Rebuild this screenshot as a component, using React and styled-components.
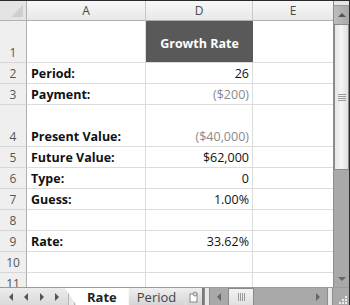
import React from 'react';
import styled, {createGlobalStyle} from 'styled-components';

const GlobalStyle = createGlobalStyle`
  html, body {
    margin: 0;
    padding: 0;
    background: #ffffff;
  }
  body {
    font-family: "Open Sans", "Liberation Sans", sans-serif;
  }
`

const Frame = styled.div`
  width: 350px;
  height: 305px;
  box-sizing: border-box;
  border-top: 1px solid #2a2a2a;
  border-right: 1px solid #2a2a2a;
  display: flex;
  flex-direction: column;
  overflow: hidden;
  background: #fff;
`

const Body = styled.div`
  display: flex;
  height: 286px;
`

const Grid = styled.div`
  display: grid;
  grid-template-columns: 27px 119px 107px 81px;
  grid-template-rows: 20px 42px 21px 21px 42px 21px 21px 21px 21px 21px 21px 21px;
  width: 334px;
  overflow: hidden;
`

const Corner = styled.div`
  background: #e4e4e4;
  border-right: 1px solid #b0b0b0;
  border-bottom: 1px solid #b0b0b0;
  box-sizing: border-box;
  position: relative;
  &::after {
    content: '';
    position: absolute;
    right: 3px;
    bottom: 3px;
    border-left: 12px solid transparent;
    border-bottom: 12px solid #cfcfcf;
  }
`

const ColHeader = styled.div`
  background: linear-gradient(#f7f7f7, #e8e8e8);
  border-right: 1px solid #c8c8c8;
  border-bottom: 1px solid #b0b0b0;
  box-sizing: border-box;
  display: flex;
  align-items: center;
  justify-content: center;
  font-size: 12px;
  color: #4a4a4a;
`

const RowHeader = styled.div`
  background: #efefef;
  border-right: 1px solid #b0b0b0;
  border-bottom: 1px solid #d6d6d6;
  box-sizing: border-box;
  display: flex;
  align-items: flex-end;
  justify-content: center;
  padding-bottom: 1px;
  font-size: 12px;
  color: #555;
`

const Cell = styled.div`
  border-right: 1px solid #dcdcdc;
  border-bottom: 1px solid #dcdcdc;
  box-sizing: border-box;
  display: flex;
  align-items: flex-end;
  justify-content: ${p => (p.$right ? 'flex-end' : 'flex-start')};
  padding: 0 3px 1px 4px;
  font-size: 12.5px;
  font-weight: ${p => (p.$bold ? 700 : 400)};
  color: ${p => (p.$muted ? '#8a8a8a' : '#111')};
  white-space: nowrap;
`

const TitleCell = styled.div`
  background: #595959;
  border-bottom: 1px solid #dcdcdc;
  box-sizing: border-box;
  display: flex;
  align-items: center;
  justify-content: center;
  padding-top: 3px;
  color: #fff;
  font-weight: 700;
  font-size: 12.5px;
`

const VScroll = styled.div`
  width: 15px;
  display: flex;
  flex-direction: column;
  background: #a9a9a9;
  border-left: 1px solid #8c8c8c;
`

const SplitBox = styled.div`
  height: 4px;
  background: #e6e6e6;
  border-bottom: 1px solid #9a9a9a;
`

const ScrollButton = styled.div`
  height: ${p => p.$h || 17}px;
  width: ${p => (p.$w ? `${p.$w}px` : 'auto')};
  background: ${p => p.$bg || 'linear-gradient(90deg, #c4c4c4, #b4b4b4)'};
  display: flex;
  align-items: center;
  justify-content: center;
`

const Thumb = styled.div`
  height: 146px;
  background: linear-gradient(90deg, #e6e6e6, #f4f4f4 50%, #dedede);
  border: 1px solid #8a8a8a;
  box-sizing: border-box;
  display: flex;
  align-items: center;
  justify-content: center;
`

const Track = styled.div`
  flex: 1;
`

const TabBar = styled.div`
  height: 18px;
  display: flex;
  align-items: stretch;
  background: #dcdcdc;
  border-top: 1px solid #9a9a9a;
`

const NavGroup = styled.div`
  width: 68px;
  display: flex;
  align-items: center;
  justify-content: space-around;
  padding: 0 3px;
  box-sizing: border-box;
  background: linear-gradient(#ececec, #d8d8d8);
`

const NavSep = styled.div`
  width: 7px;
  border-left: 1px solid #b4b4b4;
  border-right: 1px solid #b4b4b4;
  box-sizing: border-box;
  background: #e8e8e8;
`

const Tab = styled.div`
  height: 17px;
  padding: 0 ${p => (p.$active ? 12 : 8)}px 0 ${p => (p.$active ? 22 : 18)}px;
  margin-left: -10px;
  display: flex;
  align-items: center;
  font-size: 13px;
  font-weight: ${p => (p.$active ? 700 : 400)};
  color: ${p => (p.$active ? '#222' : '#444')};
  background: ${p => (p.$active ? '#ffffff' : 'linear-gradient(#f0f0f0, #d4d4d4)')};
  clip-path: polygon(0 0, 100% 0, 100% 100%, 12px 100%);
  position: relative;
  z-index: ${p => (p.$active ? 2 : 1)};
  border-bottom: 1px solid #8a8a8a;
  &:first-of-type {
    margin-left: 0;
  }
`

const NewSheet = styled.div`
  width: 24px;
  display: flex;
  align-items: center;
  justify-content: flex-end;
  padding-right: 3px;
  box-sizing: border-box;
  margin-left: -6px;
  background: linear-gradient(#eeeeee, #d2d2d2);
  clip-path: polygon(0 0, 100% 0, 100% 100%, 10px 100%);
`

const HScroll = styled.div`
  flex: 1;
  display: flex;
  align-items: stretch;
  background: #a9a9a9;
  border-left: 2px solid #7a7a7a;
`

const HSplit = styled.div`
  width: 4px;
  background: #e8e8e8;
  border-left: 1px solid #8c8c8c;
  border-right: 1px solid #8c8c8c;
`

const HThumb = styled.div`
  width: 26px;
  background: linear-gradient(#f2f2f2, #e0e0e0);
  border: 1px solid #8a8a8a;
  box-sizing: border-box;
  display: flex;
  align-items: center;
  justify-content: center;
`

const Grip = styled.div`
  width: 16px;
  display: flex;
  align-items: flex-end;
  justify-content: flex-end;
  background: #a9a9a9;
  padding: 2px;
  box-sizing: border-box;
`

const Arrow = ({dir, color = '#555', size = 4}) => {
  const s = size;
  const pts = {
    up: `0,${s} ${s},0 ${2 * s},${s}`,
    down: `0,0 ${2 * s},0 ${s},${s}`,
    left: `${s},0 ${s},${2 * s} 0,${s}`,
    right: `0,0 0,${2 * s} ${s},${s}`,
  }[dir];
  const w = dir === 'up' || dir === 'down' ? 2 * s : s;
  const h = dir === 'up' || dir === 'down' ? s : 2 * s;
  return (
    <svg width={w} height={h} viewBox={`0 0 ${w} ${h}`}>
      <polygon points={pts} fill={color}/>
    </svg>
  );
};

const Lines = ({vertical}) => (
  <svg width={vertical ? 8 : 9} height={vertical ? 9 : 8}>
    {[0, 2, 4, 6].map(i =>
      vertical
        ? <line key={i} x1="0" x2="8" y1={i + 1.5} y2={i + 1.5} stroke="#9a9a9a"/>
        : <line key={i} y1="0" y2="8" x1={i + 1.5} x2={i + 1.5} stroke="#9a9a9a"/>
    )}
  </svg>
);

const rows = [
  {n: 1, title: true},
  {n: 2, label: 'Period:', value: '26'},
  {n: 3, label: 'Payment:', value: '($200)', muted: true},
  {n: 4, label: 'Present Value:', value: '($40,000)', muted: true},
  {n: 5, label: 'Future Value:', value: '$62,000'},
  {n: 6, label: 'Type:', value: '0'},
  {n: 7, label: 'Guess:', value: '1.00%'},
  {n: 8},
  {n: 9, label: 'Rate:', value: '33.62%'},
  {n: 10},
  {n: 11},
];

function App() {
  return (
    <>
      <GlobalStyle/>
      <Frame>
        <Body>
          <Grid>
            <Corner/>
            <ColHeader>A</ColHeader>
            <ColHeader>D</ColHeader>
            <ColHeader>E</ColHeader>
            {rows.map(r => (
              <React.Fragment key={r.n}>
                <RowHeader>{r.n}</RowHeader>
                <Cell $bold>{r.label}</Cell>
                {r.title
                  ? <TitleCell>Growth Rate</TitleCell>
                  : <Cell $right $muted={r.muted}>{r.value}</Cell>}
                <Cell/>
              </React.Fragment>
            ))}
          </Grid>
          <VScroll>
            <SplitBox/>
            <ScrollButton $h={18} $bg="linear-gradient(90deg, #bdbdbd, #a8a8a8)">
              <Arrow dir="up" color="#555"/>
            </ScrollButton>
            <Thumb>
              <Lines vertical/>
            </Thumb>
            <Track/>
            <ScrollButton $h={16} $bg="#a9a9a9">
              <Arrow dir="down" color="#666"/>
            </ScrollButton>
          </VScroll>
        </Body>
        <TabBar>
          <NavGroup>
            <Arrow dir="left" color="#555"/>
            <Arrow dir="left" color="#555"/>
            <Arrow dir="right" color="#555"/>
            <Arrow dir="right" color="#555"/>
          </NavGroup>
          <NavSep/>
          <Tab $active>Rate</Tab>
          <Tab>Period</Tab>
          <NewSheet>
            <svg width="10" height="12" viewBox="0 0 10 12">
              <rect x="1" y="3" width="7" height="8" fill="#fff" stroke="#888"/>
              <circle cx="6" cy="3" r="2" fill="#ddd" stroke="#888"/>
            </svg>
          </NewSheet>
          <HScroll>
            <HSplit/>
            <ScrollButton $h={17} $w={18} $bg="#a9a9a9">
              <Arrow dir="left" color="#666"/>
            </ScrollButton>
            <HThumb><Lines/></HThumb>
            <Track/>
            <ScrollButton $h={17} $w={18} $bg="#a9a9a9">
              <Arrow dir="right" color="#666"/>
            </ScrollButton>
            <HSplit/>
          </HScroll>
          <Grip>
            <svg width="10" height="10">
              {[[8, 2], [8, 5], [8, 8], [5, 5], [5, 8], [2, 8]].map(([x, y]) => (
                <rect key={`${x}-${y}`} x={x} y={y} width="2" height="2" fill="#eee"/>
              ))}
            </svg>
          </Grip>
        </TabBar>
      </Frame>
    </>
  );
}

export default App;
